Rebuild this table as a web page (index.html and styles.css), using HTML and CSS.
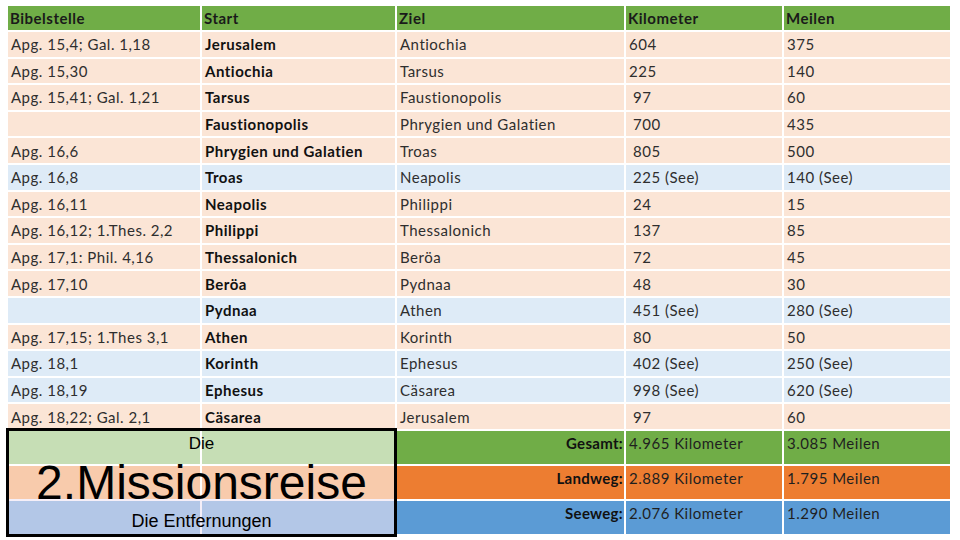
FILE: index.html
```html
<!DOCTYPE html>
<html lang="de">
<head>
<meta charset="utf-8">
<title>2. Missionsreise – Die Entfernungen</title>
<link rel="stylesheet" href="styles.css">
</head>
<body>
<div class="page">
  <div class="grid">
    <div class="row head">
      <div>Bibelstelle</div><div>Start</div><div>Ziel</div><div>Kilometer</div><div>Meilen</div>
    </div>
    <div class="row peach">
      <div>Apg. 15,4; Gal. 1,18</div><div class="b">Jerusalem</div><div>Antiochia</div><div>604</div><div>375</div>
    </div>
    <div class="row peach">
      <div>Apg. 15,30</div><div class="b">Antiochia</div><div>Tarsus</div><div>225</div><div>140</div>
    </div>
    <div class="row peach">
      <div>Apg. 15,41; Gal. 1,21</div><div class="b">Tarsus</div><div>Faustionopolis</div><div class="ind">97</div><div>60</div>
    </div>
    <div class="row peach">
      <div></div><div class="b">Faustionopolis</div><div>Phrygien und Galatien</div><div class="ind">700</div><div>435</div>
    </div>
    <div class="row peach">
      <div>Apg. 16,6</div><div class="b">Phrygien und Galatien</div><div>Troas</div><div class="ind">805</div><div>500</div>
    </div>
    <div class="row blue">
      <div>Apg. 16,8</div><div class="b">Troas</div><div>Neapolis</div><div class="ind">225 (See)</div><div>140 (See)</div>
    </div>
    <div class="row peach">
      <div>Apg. 16,11</div><div class="b">Neapolis</div><div>Philippi</div><div class="ind">24</div><div>15</div>
    </div>
    <div class="row peach">
      <div>Apg. 16,12; 1.Thes. 2,2</div><div class="b">Philippi</div><div>Thessalonich</div><div class="ind">137</div><div>85</div>
    </div>
    <div class="row peach">
      <div>Apg. 17,1: Phil. 4,16</div><div class="b">Thessalonich</div><div>Beröa</div><div class="ind">72</div><div>45</div>
    </div>
    <div class="row peach">
      <div>Apg. 17,10</div><div class="b">Beröa</div><div>Pydnaa</div><div class="ind">48</div><div>30</div>
    </div>
    <div class="row blue">
      <div></div><div class="b">Pydnaa</div><div>Athen</div><div class="ind">451 (See)</div><div>280 (See)</div>
    </div>
    <div class="row peach">
      <div>Apg. 17,15; 1.Thes 3,1</div><div class="b">Athen</div><div>Korinth</div><div class="ind">80</div><div>50</div>
    </div>
    <div class="row blue">
      <div>Apg. 18,1</div><div class="b">Korinth</div><div>Ephesus</div><div class="ind">402 (See)</div><div>250 (See)</div>
    </div>
    <div class="row blue">
      <div>Apg. 18,19</div><div class="b">Ephesus</div><div>Cäsarea</div><div class="ind">998 (See)</div><div>620 (See)</div>
    </div>
    <div class="row peach">
      <div>Apg. 18,22; Gal. 2,1</div><div class="b">Cäsarea</div><div>Jerusalem</div><div class="ind">97</div><div>60</div>
    </div>
    <div class="row sum green">
      <div></div><div></div><div class="label">Gesamt:</div><div>4.965 Kilometer</div><div>3.085 Meilen</div>
    </div>
    <div class="row sum orange">
      <div></div><div></div><div class="label">Landweg:</div><div>2.889 Kilometer</div><div>1.795 Meilen</div>
    </div>
    <div class="row sum sea">
      <div></div><div></div><div class="label">Seeweg:</div><div>2.076 Kilometer</div><div>1.290 Meilen</div>
    </div>
  </div>

  <div class="titlebox">
    <div class="t-die">Die</div>
    <div class="t-main">2.Missionsreise</div>
    <div class="t-sub">Die Entfernungen</div>
  </div>
</div>
</body>
</html>
```

FILE: styles.css
```css
html, body {
  margin: 0;
  padding: 0;
  background: #ffffff;
}

.page {
  position: relative;
  width: 960px;
  height: 540px;
  overflow: hidden;
  font-family: Lato, "Open Sans", sans-serif;
  color: #2e2e2e;
}

.grid {
  display: grid;
  grid-template-columns: 192px 193px 227px 156px 166px;
  grid-template-rows: 24px repeat(15, 24.6px) repeat(3, 33px);
  gap: 2px;
  padding: 6px 0 0 8px;
}

.row {
  display: contents;
}

.row > div {
  display: flex;
  align-items: center;
  padding-left: 3px;
  font-size: 15px;
  letter-spacing: 0.5px;
  font-weight: 400;
  white-space: nowrap;
  overflow: hidden;
}

.head > div {
  background: #70ad47;
  font-weight: 700;
  color: #1a1a1a;
  padding-left: 2px;
}

.peach > div {
  background: #fbe5d6;
}

.blue > div {
  background: #deebf7;
}

.row > .b {
  font-weight: 700;
  color: #111111;
}

.row > .ind {
  padding-left: 7px;
}

.sum > div {
  align-items: flex-start;
  padding-top: 3px;
  color: #1f1f1f;
}

.green > div {
  background: #70ad47;
}

.orange > div {
  background: #ed7d31;
}

.sea > div {
  background: #5b9bd5;
}

.sum > .label {
  justify-content: flex-end;
  padding-right: 1px;
  font-weight: 700;
  color: #111111;
  letter-spacing: 0.3px;
}

.titlebox {
  position: absolute;
  left: 6px;
  top: 428px;
  width: 391px;
  height: 109px;
  box-sizing: border-box;
  border: 3px solid #000000;
  display: grid;
  grid-template-rows: 33px 35px 35px;
  font-family: "Liberation Sans", Arial, sans-serif;
  color: #000000;
  text-align: center;
}

.t-die {
  font-size: 17px;
  line-height: 20px;
  padding-top: 3px;
  background: rgba(255, 255, 255, 0.6);
}

.t-main {
  font-size: 48px;
  line-height: 36px;
  padding-top: 1px;
  background: rgba(255, 255, 255, 0.6);
}

.t-sub {
  font-size: 18px;
  line-height: 20px;
  padding-top: 12px;
  background: rgba(239, 228, 243, 0.6);
}
```
